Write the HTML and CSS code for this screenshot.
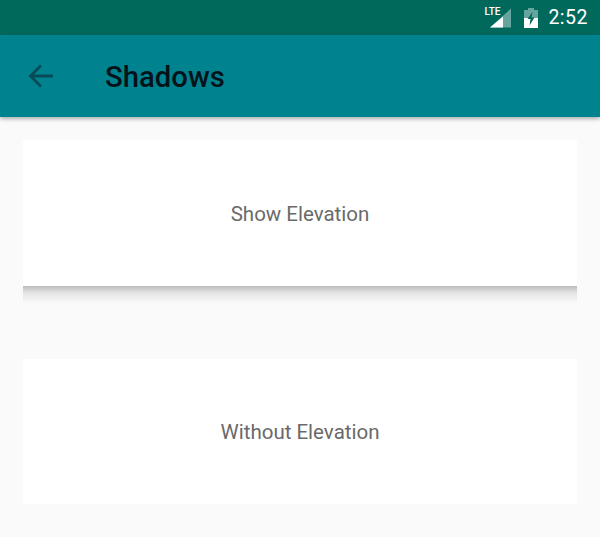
FILE: index.html
```html
<!DOCTYPE html>
<html lang="en">
<head>
    <meta charset="UTF-8">
    <meta name="viewport" content="width=device-width, initial-scale=1.0">
    <title>Shadows</title>
    <link rel="stylesheet" href="styles.css">
</head>
<body>
    <div class="status-bar">
        <span class="lte">LTE</span>
        <svg class="signal" width="22" height="20" viewBox="0 0 22 20">
            <path d="M22 0.500V19.500H1Z" fill="#fff" fill-opacity="0.4"/>
            <path d="M14 8.500V19.500H1Z" fill="#fff"/>
        </svg>
        <svg class="battery" width="14" height="20" viewBox="0 0 14 20">
            <path d="M4 0H10V2H14V20H0V2H4Z" fill="#fff" fill-opacity="0.4"/>
            <path d="M0 10H14V20H0Z" fill="#fff"/>
            <path d="M8.500 4L3.500 11H6.500L5.500 17.500L10.500 9.500H7.500Z" fill="#00695c"/>
        </svg>
        <span class="time">2:52</span>
    </div>

    <header class="app-bar">
        <svg class="back" width="26" height="26" viewBox="0 0 26 26">
            <path d="M25 13H3M13 2.500L2.500 13L13 23.500" fill="none" stroke="#084a57" stroke-width="2.800"/>
        </svg>
        <h1>Shadows</h1>
    </header>

    <main class="content">
        <div class="card">Show Elevation</div>
        <div class="card-shadow"></div>
        <div class="card card-flat">Without Elevation</div>
    </main>
</body>
</html>
```

FILE: styles.css
```css
* {
    margin: 0;
    padding: 0;
    box-sizing: border-box;
}

body {
    height: 100vh;
    overflow: hidden;
    background: #fafafa;
    font-family: Roboto, sans-serif;
}

.status-bar {
    height: 35px;
    display: flex;
    align-items: center;
    justify-content: flex-end;
    padding-right: 12px;
    background: #00695c;
    color: white;
}

.lte {
    align-self: flex-start;
    margin: 6px -11px 0 0;
    font-size: 10px;
    font-weight: 500;
}

.signal {
    margin-right: 13px;
}

.battery {
    margin-right: 10px;
}

.time {
    font-size: 19.500px;
    font-weight: 400;
    letter-spacing: 0.5px;
}

.app-bar {
    height: 82px;
    display: flex;
    align-items: center;
    gap: 51px;
    padding-left: 28px;
    background: #00838f;
    box-shadow: 0 2px 4px rgba(0, 0, 0, 0.3);
}

.app-bar h1 {
    padding-top: 2px;
    font-size: 29.300px;
    font-weight: 500;
    color: #04121a;
}

.content {
    padding: 23px 23px 0;
}

.card {
    height: 146px;
    display: flex;
    align-items: center;
    justify-content: center;
    padding-top: 1px;
    background: white;
    border-radius: 2px;
    font-size: 20.500px;
    color: #6a6a6a;
}

.card-shadow {
    height: 17px;
    background: linear-gradient(#bdbdbd, #e4e4e4 40%, #fafafa);
}

.card-flat {
    height: 145px;
    margin-top: 56px;
}
```
